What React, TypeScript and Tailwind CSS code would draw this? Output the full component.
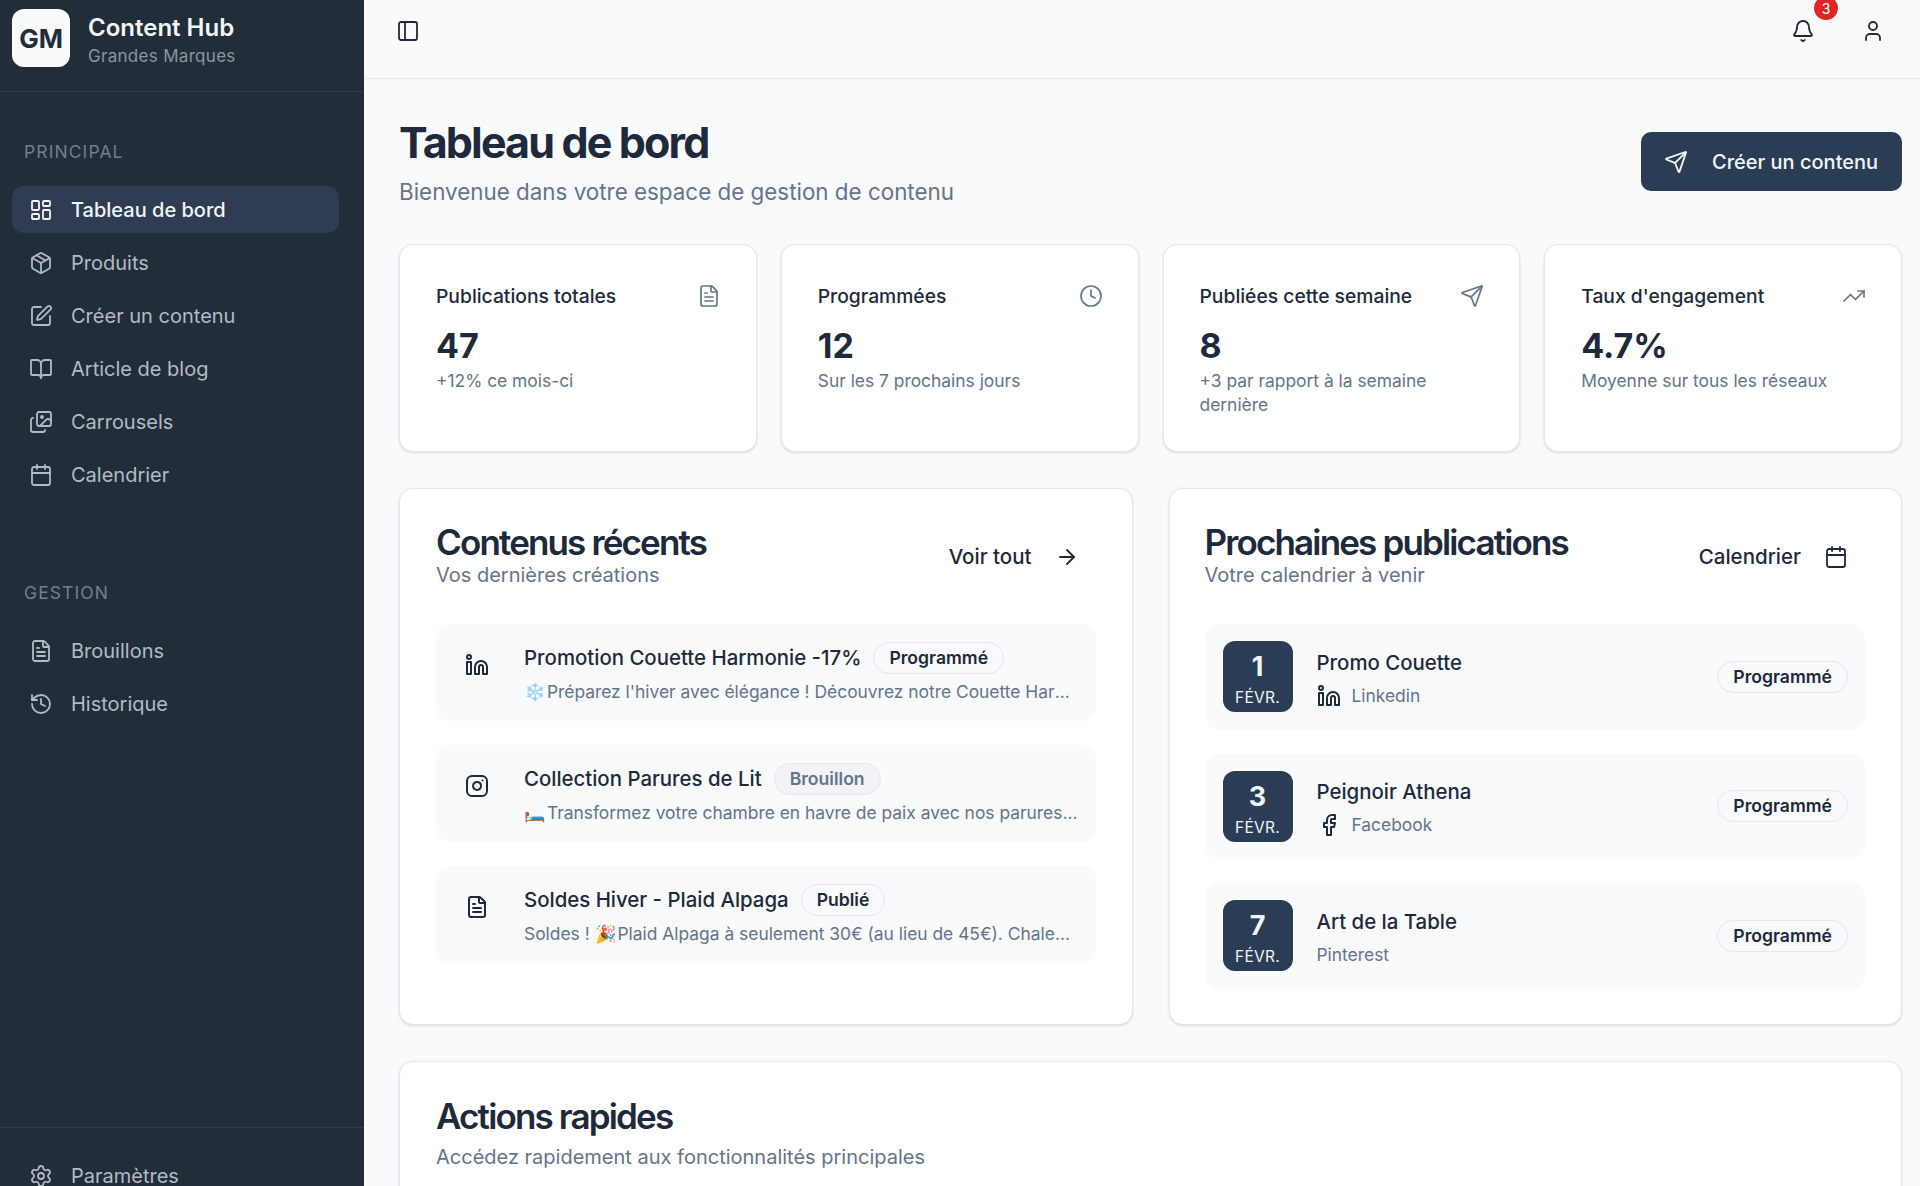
import {
  ArrowRight,
  Bell,
  BookOpen,
  Calendar,
  Clock,
  Facebook,
  FileText,
  History,
  Images,
  Instagram,
  LayoutDashboard,
  Linkedin,
  Package,
  PanelLeft,
  Send,
  Settings,
  SquarePen,
  TrendingUp,
  User,
} from 'lucide-react';

const mainNav = [
  { label: 'Tableau de bord', icon: LayoutDashboard, active: true },
  { label: 'Produits', icon: Package },
  { label: 'Créer un contenu', icon: SquarePen },
  { label: 'Article de blog', icon: BookOpen },
  { label: 'Carrousels', icon: Images },
  { label: 'Calendrier', icon: Calendar },
];

const gestionNav = [
  { label: 'Brouillons', icon: FileText },
  { label: 'Historique', icon: History },
];

const stats = [
  { title: 'Publications totales', value: '47', note: '+12% ce mois-ci', icon: FileText },
  { title: 'Programmées', value: '12', note: 'Sur les 7 prochains jours', icon: Clock },
  { title: 'Publiées cette semaine', value: '8', note: '+3 par rapport à la semaine dernière', icon: Send },
  { title: "Taux d'engagement", value: '4.7%', note: 'Moyenne sur tous les réseaux', icon: TrendingUp },
];

const recents = [
  {
    title: 'Promotion Couette Harmonie -17%',
    badge: 'Programmé',
    muted: false,
    text: (
      <>
        <span className="tracking-[-4px]">❄️</span> Préparez l'hiver avec élégance ! Découvrez notre Couette Harmonie en promotion cette semaine
      </>
    ),
    icon: Linkedin,
  },
  {
    title: 'Collection Parures de Lit',
    badge: 'Brouillon',
    muted: true,
    text: (
      <>
        <span className="tracking-[-4px]">🛏️</span> Transformez votre chambre en havre de paix avec nos parures de lit haut de gamme
      </>
    ),
    icon: Instagram,
  },
  {
    title: 'Soldes Hiver - Plaid Alpaga',
    badge: 'Publié',
    muted: false,
    text: (
      <>
        Soldes ! <span className="tracking-[-4px]">🎉</span> Plaid Alpaga à seulement 30€ (au lieu de 45€). Chaleur et douceur pour tout l’hiver
      </>
    ),
    icon: FileText,
  },
];

const upcoming = [
  { day: '1', title: 'Promo Couette', network: 'Linkedin', icon: Linkedin },
  { day: '3', title: 'Peignoir Athena', network: 'Facebook', icon: Facebook },
  { day: '7', title: 'Art de la Table', network: 'Pinterest', icon: null },
];

function NavItem({ item }: { item: { label: string; icon: typeof Bell; active?: boolean } }) {
  const Icon = item.icon;
  return (
    <div
      className={
        item.active
          ? 'flex h-[47px] items-center gap-[18px] rounded-xl bg-[#2f3c51] px-[17px] text-[20px] font-medium text-[#f1f5f9]'
          : 'flex h-[47px] items-center gap-[18px] rounded-xl px-[17px] text-[20px] text-[#b3bac4]'
      }
    >
      <Icon size={24} strokeWidth={1.8} />
      <span>{item.label}</span>
    </div>
  );
}

function Badge({ label, muted }: { label: string; muted?: boolean }) {
  return (
    <span
      className={
        muted
          ? 'flex h-8 shrink-0 items-center rounded-full border border-[#e5e7eb] bg-[#f1f3f6] px-[15px] text-[17.6px] font-semibold text-[#64748b]'
          : 'flex h-8 shrink-0 items-center rounded-full border border-[#e5e7eb] bg-[#f8fafc] px-[15px] text-[17.6px] font-semibold text-[#1e293b]'
      }
    >
      {label}
    </span>
  );
}

export default function App() {
  return (
    <div className="flex h-screen overflow-hidden bg-[#f9fafc] font-['Inter',sans-serif] text-[#1e293b]">
      <aside className="flex w-[364px] shrink-0 flex-col bg-[#222d3a]">
        <div className="flex h-[92px] items-start gap-[18px] border-b border-[#323d4b] px-3 pt-[9px]">
          <div className="flex h-[58px] w-[58px] items-center justify-center rounded-xl bg-[#f9fafc] text-[26px] font-bold text-[#222d3a]">
            GM
          </div>
          <div className="flex flex-col">
            <span className="pt-px text-[24px] leading-9 font-semibold text-[#f1f5f9]">Content Hub</span>
            <span className="-mt-px text-[17px] leading-[22px] tracking-[0.3px] text-[#8b95a3]">Grandes Marques</span>
          </div>
        </div>

        <div className="flex flex-1 flex-col px-3">
          <p className="mt-[48px] mb-[22px] pl-3 text-[17.5px] leading-6 tracking-[1.1px] text-[#747f8d]">PRINCIPAL</p>
          <div className="flex w-[327px] flex-col gap-1.5">
            {mainNav.map(item => (
              <NavItem key={item.label} item={item} />
            ))}
          </div>
          <p className="mt-[83px] mb-[22px] pl-3 text-[17.5px] leading-6 tracking-[1.1px] text-[#747f8d]">GESTION</p>
          <div className="flex w-[327px] flex-col gap-1.5">
            {gestionNav.map(item => (
              <NavItem key={item.label} item={item} />
            ))}
          </div>
        </div>

        <div className="h-[59px] border-t border-[#323d4b] px-3 pt-6">
          <NavItem item={{ label: 'Paramètres', icon: Settings }} />
        </div>
      </aside>

      <div className="flex min-w-0 flex-1 flex-col">
        <header className="flex h-[79px] shrink-0 items-start justify-between border-b border-[#e5e7eb] bg-[#fafafb] pt-[19px] pr-[35px] pl-8">
          <PanelLeft size={24} strokeWidth={1.8} />
          <div className="flex items-center gap-[46px]">
            <div className="relative">
              <Bell size={24} strokeWidth={1.8} />
              <span className="absolute -top-[23px] left-[23px] flex h-6 w-6 items-center justify-center rounded-full bg-[#dc2626] text-[14px] text-white">
                3
              </span>
            </div>
            <User size={24} strokeWidth={1.8} />
          </div>
        </header>

        <main className="flex flex-col pt-[37px] pr-[18px] pl-[35px]">
          <div className="mb-[37px] flex items-center justify-between">
            <div className="flex flex-col gap-[9px]">
              <h1 className="text-[43px] leading-[52px] font-bold tracking-[-1.85px]">Tableau de bord</h1>
              <p className="text-[22.4px] leading-[30px] text-[#64748b]">Bienvenue dans votre espace de gestion de contenu</p>
            </div>
            <button className="flex h-[59px] w-[261px] items-center gap-6 rounded-[10px] bg-[#2a3d55] pl-[23px] text-[20px] font-medium text-[#f1f5f9]">
              <Send size={24} strokeWidth={1.8} />
              Créer un contenu
            </button>
          </div>

          <div className="grid grid-cols-4 gap-6">
            {stats.map(stat => {
              const Icon = stat.icon;
              return (
                <div key={stat.title} className="rounded-[14px] border border-[#e5e7eb] bg-white pt-[37px] pr-[35px] pb-[34px] pl-9 shadow-sm">
                  <div className="flex h-7 items-center justify-between">
                    <span className="text-[19.3px] font-medium">{stat.title}</span>
                    <Icon size={24} strokeWidth={1.7} className="text-[#64748b]" />
                  </div>
                  <p className="mt-4 text-[34px] leading-10 font-bold">{stat.value}</p>
                  <p className="mt-[3px] min-h-12 text-[17.4px] leading-6 text-[#64748b]">{stat.note}</p>
                </div>
              );
            })}
          </div>

          <div className="mt-9 grid grid-cols-2 gap-9">
            <section className="rounded-[14px] border border-[#e5e7eb] bg-white px-9 pt-[33px] pb-[35px] shadow-sm">
              <div className="flex items-start justify-between">
                <div>
                  <h2 className="text-[35px] leading-10 font-semibold tracking-[-1.85px]">Contenus récents</h2>
                  <p className="mt-px text-[20px] leading-6 text-[#64748b]">Vos dernières créations</p>
                </div>
                <div className="flex h-[70px] items-center gap-[23px] pr-[17px] text-[20.5px] font-medium">
                  Voir tout
                  <ArrowRight size={24} strokeWidth={1.8} />
                </div>
              </div>
              <div className="mt-8 flex flex-col gap-6">
                {recents.map(row => {
                  const Icon = row.icon;
                  return (
                    <div key={row.title} className="flex h-[97px] items-start gap-[23px] rounded-[14px] bg-[#f8fafc] pt-4 pr-[18px] pl-4">
                      <div className="flex h-[49px] w-[49px] shrink-0 items-center justify-center rounded-lg bg-[#f9fafc]">
                        <Icon size={24} strokeWidth={2} />
                      </div>
                      <div className="min-w-0 flex-1 pt-[2px]">
                        <div className="flex h-8 items-center gap-3">
                          <span className="text-[20.4px] font-medium">{row.title}</span>
                          <Badge label={row.badge} muted={row.muted} />
                        </div>
                        <p className="mt-1.5 truncate text-[17.4px] leading-6 text-[#64748b]">{row.text}</p>
                      </div>
                    </div>
                  );
                })}
              </div>
            </section>

            <section className="rounded-[14px] border border-[#e5e7eb] bg-white pt-[33px] pr-9 pb-[35px] pl-[35px] shadow-sm">
              <div className="flex items-start justify-between">
                <div>
                  <h2 className="text-[35px] leading-10 font-semibold tracking-[-1.85px]">Prochaines publications</h2>
                  <p className="mt-px text-[20px] leading-6 text-[#64748b]">Votre calendrier à venir</p>
                </div>
                <div className="flex h-[70px] items-center gap-[23px] pr-[17px] text-[20.5px] font-medium">
                  Calendrier
                  <Calendar size={24} strokeWidth={1.8} />
                </div>
              </div>
              <div className="mt-8 flex flex-col gap-6">
                {upcoming.map(row => {
                  const Icon = row.icon;
                  return (
                    <div key={row.day} className="flex h-[105.5px] items-center rounded-[14px] bg-[#f8fafc] pr-[17px] pl-[18px]">
                      <div className="flex h-[71px] w-[70px] shrink-0 flex-col items-center rounded-xl bg-[#2a3d55] pt-[9px] text-[#f1f5f9]">
                        <span className="text-[27px] leading-[34px] font-bold">{row.day}</span>
                        <span className="mt-1 text-[15.5px] leading-5 tracking-[0.3px]">FÉVR.</span>
                      </div>
                      <div className="ml-6 flex flex-1 flex-col gap-[7px] pt-[2px]">
                        <span className="pt-px text-[20.4px] leading-7 font-medium">{row.title}</span>
                        <div className="flex h-6 items-center gap-[11px] text-[17.4px] text-[#64748b]">
                          {Icon && <Icon size={24} strokeWidth={2} className="text-[#1e293b]" />}
                          {row.network}
                        </div>
                      </div>
                      <Badge label="Programmé" />
                    </div>
                  );
                })}
              </div>
            </section>
          </div>

          <section className="mt-9 h-[200px] rounded-[14px] border border-[#e5e7eb] bg-white px-9 pt-[34px] shadow-sm">
            <h2 className="text-[35px] leading-10 font-semibold tracking-[-1.85px]">Actions rapides</h2>
            <p className="mt-[9px] text-[20px] leading-6 text-[#64748b]">Accédez rapidement aux fonctionnalités principales</p>
          </section>
        </main>
      </div>
    </div>
  );
}
